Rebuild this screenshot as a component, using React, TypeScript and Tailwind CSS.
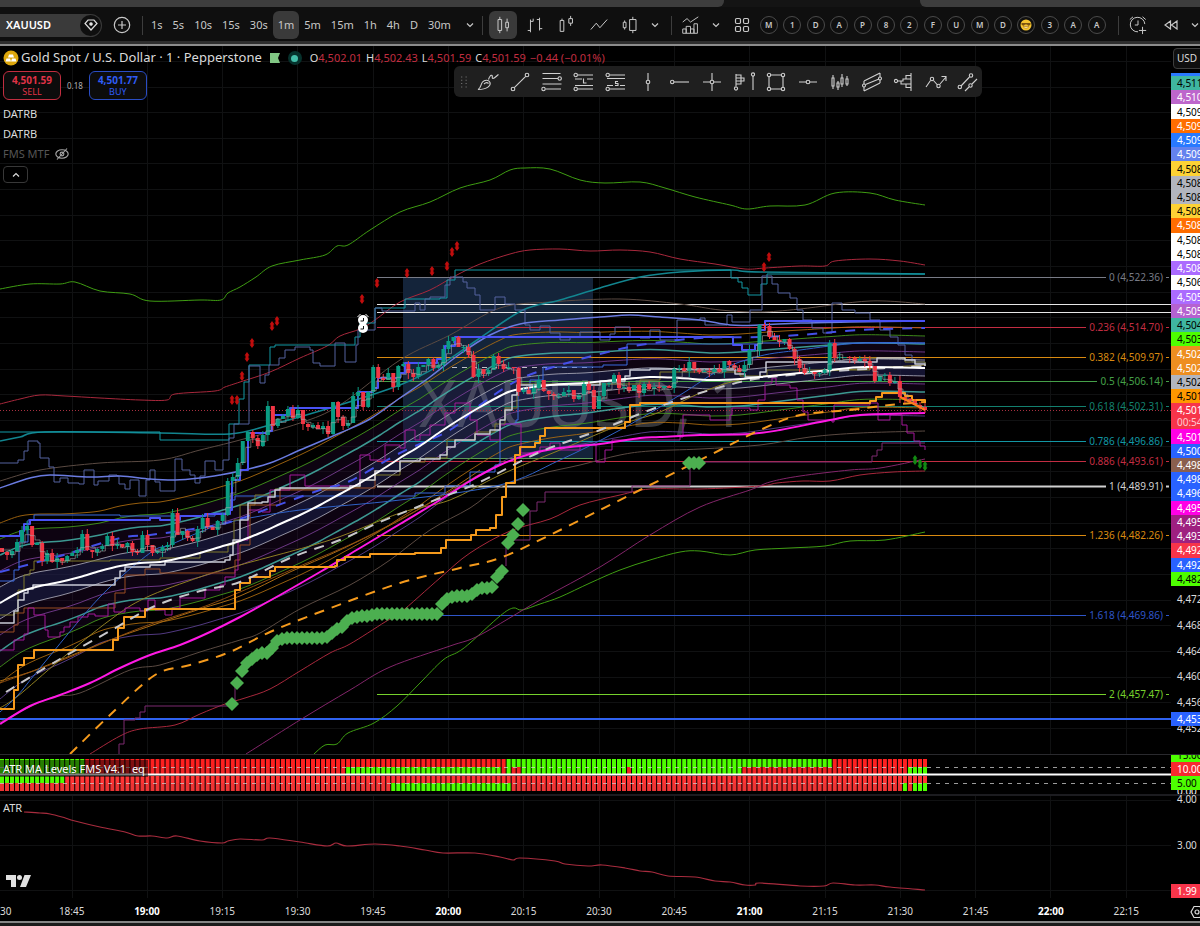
import React from "react"

type Pt = [number, number]

const STEP = 923 / 184
const barX = (i: number) => 2 + i * STEP

const parse = (s: string): Pt[] => s.trim().split(/\s+/).map((p) => p.split(",").map(Number) as Pt)

const smooth = (pts: Pt[]) => {
  let d = `M${pts[0][0]} ${pts[0][1]}`
  for (let i = 0; i < pts.length - 1; i++) {
    const a = pts[i - 1] || pts[i]
    const b = pts[i]
    const c = pts[i + 1]
    const e = pts[i + 2] || c
    d += ` C${b[0] + (c[0] - a[0]) / 6} ${b[1] + (c[1] - a[1]) / 6} ${c[0] - (e[0] - b[0]) / 6} ${c[1] - (e[1] - b[1]) / 6} ${c[0]} ${c[1]}`
  }
  return d
}

const stepped = (pts: Pt[]) => `M${pts[0][0]} ${pts[0][1]} ` + pts.slice(1).map(([x, y]) => `H${x} V${y}`).join(" ")

const at = (pts: Pt[], x: number) => {
  for (let i = 1; i < pts.length; i++) {
    if (x <= pts[i][0]) {
      const [x0, y0] = pts[i - 1]
      const [x1, y1] = pts[i]
      return y0 + ((x - x0) / (x1 - x0)) * (y1 - y0)
    }
  }
  return pts[pts.length - 1][1]
}

// moving average and the width of one channel band
const MEAN = parse(
  "0,603 20,592 40,586 60,582 80,577 100,571 120,566 140,563 160,562 180,558 200,553 220,547 240,541 260,533 280,524 300,515 320,505 340,494 360,483 380,471 400,458 420,446 440,432 460,419 480,407 500,396 515,390 550,385 585,383 615,380 650,377 680,378 710,380 740,379 770,376 800,373 830,370 865,367 925,368"
)
const UNIT = parse("0,16 50,14 100,12 240,12 400,12 523,11 660,9 749,9 874,8 925,8")
const band = (n: number): Pt[] => MEAN.map(([x, y]) => [x, y + n * at(UNIT, x)])

const area = (a: number, b: number) =>
  smooth(band(a)) + " L" + band(b).reverse().map((p) => p.join(" ")).join(" L") + " Z"

const BANDS: [number, string, number][] = [
  [-5, "#b06f10", 1],
  [-4, "#46a01c", 1],
  [-3, "#45b3a8", 1.5],
  [-2, "#7b3f98", 1],
  [-1, "#a9a9b8", 1],
  [1, "#a9a9b8", 1],
  [2, "#7b3f98", 1],
  [3, "#45b3a8", 1.5],
  [4, "#46a01c", 1],
  [5, "#b06f10", 1],
  [6, "#5f4396", 1],
]

interface Line {
  c: string
  w?: number
  dash?: string
  step?: boolean
  p: string
}

const LINES: Line[] = [
  { c: "#3f9d12", p: "0,289 30,284 60,284 75,282 100,291 130,294 150,301 200,300 221,300 228,293 240,287 256,277 272,266 300,260 325,255 337,246 348,245 370,230 400,212 430,202 460,188 490,180 510,170 525,168 550,169 580,180 605,183 640,182 665,188 695,197 730,205 747,209 770,206 805,205 835,193 870,193 895,200 925,205" },
  { c: "#3f9d12", p: "314,754 325,745 337,744 348,733 374,723 397,706 420,683 443,660 458,652 470,643 500,616 513,608 522,610 540,604 560,597 590,583 620,570 650,560 680,552 700,551 730,555 755,550 790,548 825,546 850,541 885,540 925,532" },
  { c: "#a8283c", p: "0,404 20,399 40,395 65,396 100,398 140,400 167,400 175,394 215,391 225,387 240,382 270,372 300,358 327,346 340,336 360,329 375,320 400,302 430,290 455,276 480,264 510,254 530,250 560,249 590,251 620,250 650,252 680,259 715,264 745,269 765,268 800,266 825,266 835,261 870,259 900,261 925,265" },
  { c: "#a8283c", p: "90,754 120,736 140,729 175,725 200,714 225,704 245,698 270,689 300,671 330,653 350,644 385,622 400,613 440,578 470,553 510,531 550,519 580,505 620,495 650,489 700,489 760,486 777,483 803,481 830,481 860,475 893,472 925,471" },
  { c: "#83256a", p: "246,754 300,720 350,690 390,667 450,646 480,635 540,600 600,567 650,535 700,507 750,490 770,482 800,476 850,470 880,468 925,459" },
  { c: "#5a4a42", p: "0,481 40,470 100,463 160,460 200,450 240,440 300,423 340,405 400,360 450,335 500,308 550,302 620,299 680,304 720,310 760,312 800,309 870,301 925,304" },
  { c: "#5a4a42", p: "0,722 50,698 80,693 130,670 160,665 200,652 240,640 260,633 300,609 350,585 390,560 430,530 470,508 500,487 540,474 580,465 620,455 650,451 700,449 760,445 810,437 860,433 925,431" },
  { c: "#12858f", w: 1.5, p: "0,441 20,437 45,432 160,433 230,434 270,425 330,408 400,385 440,365 480,338 523,310 560,300 600,288 640,277 680,272 732,270 760,272 925,274" },
  { c: "#139aa6", step: true, p: "0,432 160,432 160,440 229,440 229,424 239,399 244,382 249,365 270,347 275,345 355,344 355,337 360,323 375,318 375,308 400,308 405,299 440,298 447,295 447,280 455,277 455,270 731,270 731,278 738,282 742,288 748,295 761,295 761,284 767,274 925,274" },
  { c: "#55639f", step: true, p: "0,463 18,460 24,451 28,441 38,443 40,458 49,467 54,482 60,478 68,483 79,484 84,470 94,485 98,481 109,475 117,476 119,484 125,489 130,480 139,496 146,480 150,470 155,482 160,491 173,491 175,459 182,470 190,475 195,483 200,476 205,461 215,470 223,460 229,438 234,424 249,366 260,383 265,375 269,365 279,358 285,350 295,347 310,350 313,363 320,366 335,343 345,362 356,345 358,330 375,320 375,308 382,311 400,311 415,303 420,310 425,299 430,297 445,285 450,277 463,282 467,288 475,295 480,310 495,310 495,297 505,304 515,310 525,325 530,330 540,326 550,333 560,340 570,337 580,332 600,340 610,334 615,327 630,337 640,338 650,330 660,340 677,340 677,320 700,318 705,325 727,315 732,322 750,310 762,300 762,276 772,284 778,293 790,298 797,310 803,320 812,328 823,333 832,303 842,310 855,313 870,320 880,330 890,337 898,345 905,355 912,362 925,364" },
  { c: "#6a7be0", w: 1.5, p: "0,488 30,478 50,475 90,477 120,476 150,479 175,480 200,478 220,475 240,471 270,463 300,450 340,433 370,419 400,398 430,377 460,354 490,335 520,324 560,320 600,317 630,315 660,317 700,320 730,325 760,325 800,323 850,322 925,321" },
  { c: "#a86a14", p: "0,681 30,672 60,660 110,640 150,626 200,609 240,596 290,572 340,550 400,520 450,490 480,470" },
  { c: "#8a4a10", p: "0,683 60,661 140,628 200,608 240,592 300,566 360,540 430,503 480,474" },
  { c: "#8f7f22", p: "0,708 18,696 60,660 110,620 145,598 200,577 240,565 330,540 400,513 450,500 500,475 560,450 620,425 660,412 700,393 740,380 800,373 925,365" },
  { c: "#2f62c8", p: "0,712 18,695 40,668 100,597 150,553 170,545 200,532 230,522 300,510 400,500 500,485 560,460 620,430 680,395 720,370 760,356 800,350 860,343 925,343" },
  { c: "#3a6ae0", step: true, p: "0,581 14,570 19,542 28,520 34,515 120,516 215,513 230,500 235,496 415,496 415,493 445,490 445,486 470,472 495,465 500,424 516,420 518,390 530,380 543,367 603,365 627,362 627,344 760,343 925,343" },
  { c: "#7f7a2a", step: true, p: "0,615 14,613 18,590 24,575 30,570 34,561 110,560 160,558 200,552 228,545 234,520 240,505 255,495 275,489 340,487 360,480 375,475 400,462 425,458 447,440 475,432 495,424 505,408 517,384 640,380 660,372 740,376 767,370 870,358 905,362 925,366" },
  { c: "#9a4d22", step: true, p: "0,632 14,625 18,613 24,608 112,608 115,593 125,575 145,569 160,573 235,573 235,560 240,545 250,505 280,490 350,488 375,470" },
  { c: "#a3189a", step: true, p: "0,650 14,640 24,634 28,608 34,615 45,630 48,637 60,632 64,627 70,622 78,617 88,614 95,616 108,604 114,612 125,608 140,611 148,600 155,610 165,615 172,608 180,598 190,598 205,590 220,585 225,577 235,570 238,540 248,510 262,512 270,490 290,475 305,475 305,486 355,485 360,455 370,460 385,445 400,448 405,430 415,440 420,435 430,425 445,413 455,403 470,420 477,435 490,440 500,425 505,424 520,424 521,453 540,447 550,443 560,450 580,445 596,462 605,450 612,440 680,437 683,415 710,420 730,415 732,408 750,410 758,400 765,383 772,378 776,385 790,388 797,400 803,412 808,420 832,422 834,405 870,403 878,420 890,415 902,425 907,433 914,441 920,446 925,450" },
  { c: "#7c2a70", step: true, p: "119,754 119,744 124,720 135,718 140,712 145,706 230,705 235,680" },
  { c: "#7c2a70", step: true, p: "506,566 506,540 530,511 537,502 545,492 632,486 690,467 695,462 872,462 872,456 877,450 882,443 910,443 925,443" },
  { c: "#4a52f5", w: 2, step: true, p: "0,536 20,531 24,524 30,520 150,518 160,520 180,516 205,514 230,510 232,480 240,470 248,433 267,431 272,415 290,408 355,408 358,392 373,388 378,378 400,373 405,363 437,359 445,346 455,337 732,337 733,345 742,350 755,345 760,330 765,321 925,321" },
  { c: "#4450e8", w: 2, dash: "10 9", p: "0,572 60,556 120,538 150,535 200,528 230,522 270,508 320,490 350,481 400,453 450,430 480,405 520,379 560,365 600,354 640,345 700,338 760,337 800,335 860,330 925,328" },
  { c: "#c9ccd6", w: 1.5, step: true, p: "0,623 14,611 18,600 24,593 28,589 33,585 110,585 115,578 120,571 125,567 150,565 165,562 225,560 230,555 233,540 240,520 248,503 262,502 268,497 275,490 280,488 350,486 360,480 375,471 400,461 420,459 440,455 447,447 455,440 475,434 490,430 500,420 505,410 512,395 517,385 600,381 625,376 630,370 650,369 690,369 735,374 745,377 760,372 766,362 832,362 870,362 877,358 905,360 915,364 925,366" },
  { c: "#ff19e4", w: 2, p: "0,724 30,706 60,695 90,683 120,668 150,655 180,645 210,632 240,617 280,595 320,572 360,548 400,524 440,500 470,481 500,465 530,454 560,448 600,444 640,438 660,437 700,435 750,434 780,430 830,420 860,415 925,413" },
  { c: "#f59a1c", w: 2, step: true, p: "0,709 14,690 18,665 24,658 34,650 113,640 118,628 124,617 145,609 234,609 235,590 240,583 250,577 270,571 275,567 335,566 337,560 345,557 370,554 415,553 441,548 446,540 471,535 476,530 490,528 496,515 502,497 506,483 515,455 520,447 535,443 540,436 545,428 610,428 625,422 630,405 640,403 870,401 876,397 882,393 900,393 905,396 912,400 925,403" },
  { c: "#f59a1c", w: 2, dash: "10 8", p: "70,754 110,715 155,675 190,665 230,652 270,632 320,612 400,583 460,568 500,558 550,535 600,510 640,490 680,470 720,450 760,430 800,415 850,410 890,405 925,402" },
  { c: "#c8c8cc", w: 2, dash: "10 8", p: "6,692 60,659 110,631 155,606 200,591 240,582 290,558 340,540 380,522 430,502 480,482 540,452 600,430 650,410 700,393 750,380 800,374 850,370 925,366" },
]

// close of each bar, in chart pixels
const CLOSES = [
  552, 555, 551, 542, 530, 526, 545, 543, 561, 553,
  562, 558, 561, 556, 553, 550, 534, 550, 552, 549,
  546, 536, 546, 544, 547, 543, 552, 553, 535, 545,
  553, 551, 547, 545, 513, 535, 531, 538, 541, 529,
  518, 527, 530, 521, 515, 481, 477, 463, 441, 432,
  438, 446, 435, 406, 426, 419, 416, 409, 418, 410,
  424, 427, 425, 429, 426, 434, 402, 417, 426, 423,
  396, 392, 407, 392, 367, 378, 380, 373, 387, 366,
  364, 373, 377, 367, 365, 359, 368, 365, 349, 341,
  337, 347, 347, 355, 377, 369, 374, 370, 356, 364,
  369, 367, 368, 392, 390, 394, 388, 380, 391, 394,
  396, 396, 392, 390, 399, 395, 384, 390, 409, 396,
  383, 383, 375, 388, 387, 391, 385, 393, 384, 389,
  387, 388, 386, 388, 369, 368, 371, 362, 369, 372,
  371, 372, 369, 372, 361, 365, 368, 372, 365, 350,
  350, 325, 326, 337, 340, 342, 339, 349, 359, 368,
  373, 372, 374, 373, 370, 343, 358, 357, 357, 358,
  361, 359, 361, 366, 381, 376, 375, 383, 381, 397,
  399, 401, 405, 407, 410,
]

const DIAMONDS = parse(
  "232,704 237,683 242,671 247,663 252,659 257,655 262,653 267,653 272,648 277,641 282,639 287,638 292,638 297,638 302,638 307,638 312,638 317,638 322,638 327,637 332,633 337,629 342,627 347,621 352,618 357,617 362,616 367,616 372,615 377,614 382,614 387,614 392,614 397,614 402,614 407,614 412,614 417,614 422,614 427,614 432,614 437,614 442,604 447,599 452,597 457,596 462,596 467,596 472,594 477,590 482,588 487,588 492,587 497,577 502,571 508,543 513,535 518,524 523,510 689,463 694,463 699,463"
)

const SELLS = parse("232,400 237,400 242,376 247,357 252,343 272,326 277,321 362,299 377,283 407,273 432,271 447,266 452,252 457,246 764,267 769,257")
const BUYS = parse("915,460 920,464 925,466")

const FIBS: [number, string, string, number, number?][] = [
  [277, "0 (4,522.36)", "#787b86", 1106],
  [327, "0.236 (4,514.70)", "#c22d42", 1086],
  [357, "0.382 (4,509.97)", "#d98a10", 1086],
  [381, "0.5 (4,506.14)", "#45a049", 1097],
  [406, "0.618 (4,502.31)", "#13806f", 1086],
  [441, "0.786 (4,496.86)", "#1297a5", 1086],
  [461, "0.886 (4,493.61)", "#c22d42", 1086],
  [486, "1 (4,489.91)", "#d0d0d0", 1106, 2],
  [535, "1.236 (4,482.26)", "#d98a10", 1086],
  [615, "1.618 (4,469.86)", "#2f55c8", 1086],
  [694, "2 (4,457.47)", "#76d12c", 1106],
]

const TIMES: [string, boolean?][] = [
  ["18:45"], ["19:00", true], ["19:15"], ["19:30"], ["19:45"], ["20:00", true], ["20:15"], ["20:30"],
  ["20:45"], ["21:00", true], ["21:15"], ["21:30"], ["21:45"], ["22:00", true], ["22:15"],
]
const GRID_X = TIMES.map((_, i) => Math.round(71.5 + i * 75.3) + 0.5)

const TAGS: [string, string][] = [
  ["4,511", "bg-[#3fb6a0] text-black"],
  ["4,510", "bg-[#bd66cc] text-white"],
  ["4,509", "bg-white text-black"],
  ["4,509", "bg-[#ff6d00] text-white"],
  ["4,509", "bg-[#2979ff] text-white"],
  ["4,509", "bg-[#6482ee] text-white"],
  ["4,508", "bg-[#fdd235] text-black"],
  ["4,508", "bg-[#b2b5be] text-black"],
  ["4,508", "bg-[#b2b5be] text-black"],
  ["4,508", "bg-[#fdd235] text-black"],
  ["4,508", "bg-[#ff6d00] text-white"],
  ["4,508", "bg-white text-black"],
  ["4,508", "bg-white text-black"],
  ["4,508", "bg-[#ab6bff] text-white"],
  ["4,506", "bg-white text-black"],
  ["4,505", "bg-[#ab6bff] text-white"],
  ["4,505", "bg-[#b562d0] text-white"],
  ["4,504", "bg-[#3fb6a0] text-black"],
  ["4,503", "bg-[#4dff00] text-black"],
  ["4,502", "bg-[#ee8e20] text-white"],
  ["4,502", "bg-[#ee8e20] text-white"],
  ["4,502", "bg-[#b2b5be] text-black"],
  ["4,501", "bg-[#ff9800] text-black"],
  ["4,501", "bg-[#f7344a] text-white"],
  ["4,501", "bg-[#ff00e5] text-white"],
  ["4,500", "bg-[#2962ff] text-white"],
  ["4,498", "bg-[#8a5f4e] text-white"],
  ["4,498", "bg-[#2962ff] text-white"],
  ["4,496", "bg-[#2962ff] text-white"],
  ["4,495", "bg-[#ff00e5] text-white"],
  ["4,495", "bg-[#9e2080] text-white"],
  ["4,493", "bg-[#9e2080] text-white"],
  ["4,492", "bg-[#f7344a] text-white"],
  ["4,492", "bg-[#2962ff] text-white"],
  ["4,482", "bg-[#4dff00] text-black"],
]

const Icon: React.FC<{ children: React.ReactNode; className?: string }> = ({ children, className = "size-[22px]" }) => (
  <svg viewBox="0 0 22 22" fill="none" stroke="currentColor" strokeWidth="1.1" className={`shrink-0 ${className}`}>
    {children}
  </svg>
)

const Chevron = () => (
  <svg viewBox="0 0 8 8" fill="none" stroke="currentColor" strokeWidth="1.2" className="size-2">
    <path d="M1 2.500 4 5.500 7 2.500" />
  </svg>
)

const Separator = () => <div className="h-[19px] w-px shrink-0 bg-[#3d3d3d]" />

const INTERVALS = ["1s", "5s", "10s", "15s", "30s", "1m", "5m", "15m", "1h", "4h", "D", "30m"]
const LAYOUTS = ["M", "1", "D", "A", "P", "8", "2", "F", "U", "M", "D", "face", "3", "A", "A"]

const CHART_TYPES: [string, React.ReactNode][] = [
  ["Candles", <path d="M7.500 2v3M7.500 17v3M5.500 5h4v12h-4zM15.500 4v4M15.500 14v4M14 8h3v6h-3z" />],
  ["Bars", <path d="M6 5v14M3 17h3M6 7h3M16 3v14M13 5h3M16 15h3M9 4v3" />],
  ["Hollow candles", <path d="M3.500 6h4v12h-4zM5.500 4v2M15 1v3M15 9v3M13 4h4v5h-4z" />],
  ["Line", <path d="M2 16 8 9l4 5 8-9" />],
  ["Heikin Ashi", <path d="M4 6v2M4 14v2M2.500 8h3v6h-3zM13 2v3M13 17v3M9.500 5h7v12h-7z" />],
]

const DRAW_TOOLS: [string, React.ReactNode][] = [
  ["Brush", <path d="M1 18.500c3-1 2.500-5 4.500-7.500 2-2.500 6.500-2.500 7.500.5S10.500 18.500 1 18.500zM7 13c1.500-1.500 3.500-1.500 4.500-.5M11.500 8.500c1-3 2.500-5 3.500-4s-.5 3 1 3S20 4.500 21.500 3.500" />],
  ["Trend line", <><circle cx="4" cy="18" r="1.800" /><circle cx="18" cy="4" r="1.800" /><path d="M5.300 16.700 16.700 5.300" /></>],
  ["Fib retracement", <><path d="M1.500 2.500h18M1.500 7.500H17M1.500 13h19M4.500 18H20" /><circle cx="18.700" cy="7.500" r="1.700" /><circle cx="2.500" cy="18" r="1.700" /></>],
  ["Long position", <><path d="M4.500 4H20M2 8h7M14 8h6M2 14.500h18M4.500 18H20M10.500 7.500v4.500h3" /><circle cx="2.700" cy="4" r="1.700" /><circle cx="2.700" cy="18" r="1.700" /></>],
  ["Short position", <><path d="M4.500 4H20M2 7.500h18M2 14.500h6M15 14.500h5M4.500 18H20M13 10.500h-2.500v2H13v2h-3" /><circle cx="2.700" cy="4" r="1.700" /><circle cx="2.700" cy="18" r="1.700" /></>],
  ["Vertical line", <><path d="M11 2v7M11 13v7" /><circle cx="11" cy="11" r="1.800" /></>],
  ["Horizontal ray", <><path d="M5 11h15" /><circle cx="3.200" cy="11" r="1.700" /></>],
  ["Cross line", <><path d="M11 2v7M11 13v7M2 11h7M13 11h7" /><circle cx="11" cy="11" r="1.800" /></>],
  ["Fixed range", <><path d="M3 3v12M3 4h5v3h3v3H8v3H3M3 7h5v3H3M20 5v14" /><circle cx="3" cy="17.500" r="1.600" /><circle cx="20" cy="3.500" r="1.600" /></>],
  ["Rectangle", <><path d="M5.500 4h11M5.500 18h11M4 5.500v11M18 5.500v11" /><circle cx="4" cy="4" r="1.700" /><circle cx="18" cy="4" r="1.700" /><circle cx="4" cy="18" r="1.700" /><circle cx="18" cy="18" r="1.700" /></>],
  ["Horizontal line", <><path d="M2 11h7M13 11h7" /><circle cx="11" cy="11" r="1.800" /></>],
  ["Bars pattern", <path d="M4 4v3M4 15v3M3 7h2v8H3zM9 10v2M9 16v3M8 12h2v4H8zM13 3v4M13 13v3M12 7h2v6h-2zM18 5v3M18 13v2M17 8h2v5h-2z" />],
  ["Channel", <><path d="M3 10 19 2M4.500 13.500 18 8M3 20l16-8M3 10v3M3 16v4M19 2v4M19 9v3" /><circle cx="3" cy="14.500" r="1.500" /><circle cx="19" cy="7.500" r="1.500" /></>],
  ["Anchored profile", <><path d="M4.500 10H8M18 2v18M18 4.500h-5V8M18 8h-8v2H8v3h10M18 16.500h-5V13" /><circle cx="3" cy="10" r="1.600" /></>],
  ["Path", <><path d="M1 16 5.500 9.500M8.500 9.500l4 4.500M15 13l6-7M16.500 5.500H21V10" /><circle cx="7" cy="8" r="1.700" /><circle cx="13.500" cy="15" r="1.700" /></>],
  ["Parallel lines", <><path d="M5 15 13.500 6M9 20l4-4M16 13l5-5" /><circle cx="3.800" cy="16" r="1.700" /><circle cx="15" cy="4.500" r="1.700" /><circle cx="14.500" cy="14.500" r="1.700" /></>],
]

const TopBar = () => (
  <header className="bg-[#0f0f0f]">
    <div className="flex h-[7px] justify-between bg-[#141414]">
      <div className="w-[60.3%] rounded-br-md bg-[#3d3d3d]" />
      <div className="w-[23.3%] rounded-bl-md bg-[#3d3d3d]" />
    </div>
    <div className="flex h-[34px] items-center overflow-hidden whitespace-nowrap pt-0.5 text-[11px] text-[#c8c8c8]">
      <div className="flex h-[23px] w-[102px] shrink-0 items-center justify-between rounded-r-full bg-[#3a3a3a] pl-1.5">
        <button className="font-semibold text-white">XAUUSD</button>
        <button aria-label="Symbol details" className="mr-px flex size-[21px] items-center justify-center rounded-full bg-[#0f0f0f]">
          <svg viewBox="0 0 14 12" fill="none" stroke="#ddd" strokeWidth="1.200" className="h-3 w-3.5">
            <path d="M4 1h6l3 3.500L7 11 1 4.500z" />
            <circle cx="7" cy="5" r="1.200" fill="#fff" />
          </svg>
        </button>
      </div>
      <button aria-label="Compare" className="flex w-10 shrink-0 justify-center">
        <svg viewBox="0 0 18 18" fill="none" stroke="currentColor" strokeWidth="1.200" className="size-[18px]">
          <circle cx="9" cy="9" r="7.700" />
          <path d="M9 5v8M5 9h8" />
        </svg>
      </button>
      <Separator />
      <div className="ml-[3px] flex shrink-0 items-center">
        {INTERVALS.map((t) => (
          <button key={t} className={`h-7 rounded-md px-[5px] ${t === "1m" ? "bg-[#3a3a3a]" : ""}`}>
            {t}
          </button>
        ))}
        <button aria-label="More intervals" className="ml-1 flex h-7 w-5 items-center justify-center">
          <Chevron />
        </button>
      </div>
      <div className="w-0.5 shrink-0" />
      <Separator />
      <div className="ml-1.5 flex shrink-0 items-center gap-1">
        {CHART_TYPES.map(([name, glyph], i) => (
          <button
            key={name}
            aria-label={name}
            className={`flex size-7 items-center justify-center rounded-md ${i === 0 ? "bg-[#3a3a3a]" : ""}`}
          >
            <Icon className="size-5">{glyph}</Icon>
          </button>
        ))}
        <button aria-label="More chart types" className="flex h-7 w-3 items-center justify-center">
          <Chevron />
        </button>
      </div>
      <div className="w-2.5 shrink-0" />
      <Separator />
      <div className="flex shrink-0 items-center">
        <button aria-label="Indicators" className="flex h-7 w-[38px] items-center justify-center">
          <Icon className="size-[19px]">
            <path d="M2 7 7 3l4 4 9-6M2 15h4v5H2zM6 12h5v8H6zM11 15h4v5h-4zM15 9h4v11h-4z" />
          </Icon>
        </button>
        <button aria-label="Favourite indicators" className="flex h-7 w-3 items-center justify-center">
          <Chevron />
        </button>
        <button aria-label="Templates" className="flex h-7 w-10 items-center justify-center">
          <svg viewBox="0 0 16 16" fill="none" stroke="currentColor" strokeWidth="1.200" className="size-4">
            <rect x="1.500" y="1.500" width="5" height="5" rx="1.200" />
            <rect x="9.500" y="1.500" width="5" height="5" rx="1.200" />
            <rect x="1.500" y="9.500" width="5" height="5" rx="1.200" />
            <rect x="9.500" y="9.500" width="5" height="5" rx="1.200" />
          </svg>
        </button>
      </div>
      <div className="ml-[-2px] flex w-[346px] shrink-0 items-center justify-between text-[8px] font-semibold">
        {LAYOUTS.map((l, i) => (
          <button
            key={i}
            aria-label={l === "face" ? "Emoji template" : undefined}
            className="flex size-[18px] items-center justify-center rounded-full border border-[#4a4a4a]"
          >
            {l === "face" ? (
              <svg viewBox="0 0 12 12" className="size-3">
                <circle cx="6" cy="6" r="5.500" fill="#f4c430" />
                <path d="M1.500 4h9v1.500q-1 1.500-2.500 1l-1-1h-2l-1 1q-1.500.5-2.500-1z" fill="#7a5310" />
                <path d="M3 7.500h6q-3 3.500-6 0" fill="#fff3c4" stroke="#a8741a" strokeWidth=".6" />
              </svg>
            ) : (
              l
            )}
          </button>
        ))}
      </div>
      <div className="w-3 shrink-0" />
      <Separator />
      <button aria-label="Create alert" className="flex h-7 w-[38px] shrink-0 items-center justify-center">
        <Icon className="size-5">
          <path d="M18.500 10A8 8 0 1 0 11 18.500M11 6v5H7.500M2 5l3.500-3M16 2l3.500 3M16 13v8M12 17h8" />
        </Icon>
      </button>
      <button aria-label="Replay" className="flex h-7 w-7 shrink-0 items-center justify-center">
        <svg viewBox="0 0 14 10" fill="none" stroke="currentColor" strokeWidth="1.200" className="h-2.5 w-3.5">
          <path d="M6.500 1v8L1 5zM13 1v8L7.500 5z" />
        </svg>
      </button>
      <button aria-label="Replay menu" className="ml-1.5 flex h-7 shrink-0 items-center">
        <Chevron />
      </button>
    </div>
    <div className="h-[5px] border-b-2 border-[#8c8c8c] bg-[#2e2e2e]" />
  </header>
)

const Arrow: React.FC<{ x: number; y: number; color: string }> = ({ x, y, color }) => (
  <path d={`M${x} ${y - 5}l2.500 3.500h-1v3h1l-2.500 3.500-2.500-3.500h1v-3h-1z`} fill={color} />
)

const PriceChart = () => (
  <svg viewBox="0 46 1171 708" preserveAspectRatio="xMaxYMid slice" className="block h-[708px] w-full" role="img" aria-label="XAUUSD chart">
    <g stroke="#101112" shapeRendering="crispEdges">
      {GRID_X.map((x) => (
        <path key={x} d={`M${x} 46V754`} />
      ))}
      {Array.from({ length: 27 }, (_, i) => (
        <path key={i} d={`M0 ${Math.round(728 - i * 25.66) + 0.5}H1171`} />
      ))}
    </g>
    <rect x="403" y="278" width="190" height="180" fill="#14243a" />
    <path d={area(-4, 4)} fill="#2a0a38" fillOpacity=".3" />
    <path d={area(-1, 1)} fill="#1c2350" fillOpacity=".5" />
    <text x="419" y="427" fontSize="65" fill="#8b8e99" fillOpacity=".38">
      XAUUSD, 1
    </text>

    <path d="M377 304.500H1171M377 312.500H1171" stroke="#e6e6e6" />
    {FIBS.map(([y, label, color, end, w]) => (
      <g key={label}>
        <path d={`M377 ${y + 0.5}H${end}M1166 ${y + 0.5}h3`} stroke={color} strokeWidth={w || 1} />
        <text x="1163" y={y + 4} fontSize="10" textAnchor="end" fill={color}>
          {label}
        </text>
      </g>
    ))}
    <path d="M403 458.500H593" stroke="#5c9a58" />
    <path d="M452 367.500H593" stroke="#bfbfc6" strokeDasharray="5 5" />
    <path d="M0 410.500H1171" stroke="#a83040" strokeDasharray="1 2" />
    <path d="M0 719H1171" stroke="#2f62f0" strokeWidth="2" />

    <g fill="none" strokeLinejoin="round">
      {BANDS.map(([n, c, w]) => (
        <path key={n} d={smooth(band(n))} stroke={c} strokeWidth={w} strokeOpacity=".85" />
      ))}
      {LINES.map((l, i) => (
        <path
          key={i}
          d={l.step ? stepped(parse(l.p)) : smooth(parse(l.p))}
          stroke={l.c}
          strokeWidth={l.w || 1}
          strokeDasharray={l.dash}
        />
      ))}
      <path d={smooth(MEAN)} stroke="#fff" strokeWidth="2" />
    </g>

    {CLOSES.map((c, i) => {
      const o = i ? CLOSES[i - 1] : 548
      const top = Math.min(o, c)
      const h = Math.max(1, Math.abs(o - c))
      const color = c > o ? "#f23645" : "#0b9c83"
      return (
        <g key={i} fill={color}>
          <rect x={barX(i) - 2} y={top} width="4" height={h} />
          <rect x={barX(i) - 0.5} y={top - ((i * 7) % 6)} width="1" height={h + ((i * 7) % 6) + ((i * 5) % 7)} />
        </g>
      )
    })}
    {/* trailing stop over the bars */}
    <path
      d={"M2 550" + CLOSES.map((_, i) => (i > 1 ? `H${barX(i) - 2}V${(CLOSES[i] + CLOSES[i - 1] + CLOSES[i - 2]) / 3 + 2}` : "")).join("")}
      fill="none"
      stroke="#a8a8a8"
      strokeOpacity=".6"
    />
    <path d="M900 397 912 403 925 410" fill="none" stroke="#ff7a1a" strokeWidth="2" />

    {DIAMONDS.map(([x, y]) => (
      <path key={x} d={`M${x} ${y - 7}l7 7-7 7-7-7z`} fill="#4caf50" />
    ))}
    {SELLS.map(([x, y]) => (
      <Arrow key={x} x={x} y={y} color="#c00d0d" />
    ))}
    {BUYS.map(([x, y]) => (
      <Arrow key={x} x={x} y={y} color="#128a12" />
    ))}
    {[320, 328].map((y) => (
      <g key={y}>
        <circle cx="363" cy={y} r="5" fill="#fff" />
        <path d={`M363.500 ${y - 2}v3h-3`} fill="none" stroke="#111" />
      </g>
    ))}
    <path d="M357.500 317l3-3M368.500 317l-3-3" stroke="#fff" />
  </svg>
)

// [from, to] bar ranges (in pixels) that are lime, row by row
const ROWS: { y: number; h: number; red: string; lime: [number, number][] }[] = [
  { y: 759, h: 8, red: "#ff2020", lime: [[0, 84], [505, 833]] },
  { y: 767, h: 7, red: "#f02424", lime: [[0, 84], [345, 499], [506, 510], [521, 626], [631, 741], [907, 930]] },
  { y: 776, h: 7, red: "#ff3434", lime: [[0, 64]] },
  { y: 783, h: 8, red: "#ee3434", lime: [[390, 511], [902, 907], [912, 930]] },
]

const LevelsPane = () => (
  <svg viewBox="0 755 1171 39" preserveAspectRatio="xMaxYMid slice" className="block h-[39px] w-full" role="img" aria-label="ATR MA Levels">
    {ROWS.map((r) =>
      CLOSES.map((_, i) => {
        const x = barX(i)
        const lime = r.lime.some(([a, b]) => x >= a && x < b)
        return <rect key={`${r.y}-${i}`} x={x - 2} y={r.y} width="4" height={r.h} fill={lime ? "#4dff00" : r.red} />
      })
    )}
    <path d="M0 767.500H1171M0 783.500H1171" stroke="#cfcfcf" strokeOpacity=".75" strokeDasharray="4 5" />
    <path d="M0 774.500H1171" stroke="#fff" strokeWidth="2" />
  </svg>
)

const AtrPane = () => (
  <svg viewBox="0 796 1171 102" preserveAspectRatio="xMaxYMid slice" className="block h-[102px] w-full" role="img" aria-label="ATR">
    <g stroke="#101112" shapeRendering="crispEdges">
      {GRID_X.map((x) => (
        <path key={x} d={`M${x} 796V898`} />
      ))}
      <path d="M0 800.500H1171M0 845.500H1171M0 890.500H1171" />
    </g>
    <path
      d={smooth(parse("24,812 40,813 50,814 62,817 75,821 100,827 125,832 138,836 152,836 167,838 177,836 200,841 222,843 228,841 240,839 262,840 270,838 300,842 327,846 336,843 347,846 375,844 400,846 425,850 443,853 475,853 500,857 513,860 520,858 555,861 565,864 588,866 602,865 625,868 640,871 652,872 668,876 695,877 715,881 730,882 745,885 755,885 760,883 800,886 824,886 833,883 855,885 875,885 890,887 925,890"))}
      fill="none"
      stroke="#a82c3e"
      strokeWidth="1.200"
    />
    <path d="M6 875h10v12h-5v-7H6zM24.500 875H31l-5 12h-6z" fill="#e0e0e0" />
    <circle cx="19.500" cy="877.500" r="2.500" fill="#e0e0e0" />
  </svg>
)

const OHLC: [string, string][] = [["O", "4,502.01"], ["H", "4,502.43"], ["L", "4,501.59"], ["C", "4,501.59"]]

const Legend = () => (
  <div className="absolute left-[3px] top-1 flex flex-col items-start whitespace-nowrap">
    <div className="flex h-4 items-center">
      <svg viewBox="0 0 16 16" className="size-4">
        <circle cx="8" cy="8" r="7.500" fill="#dda70c" />
        <path d="M6 4.500h4l1 3H5zM3.500 8.500h3.500l1 3H2.500zM9 8.500h3.500l1 3H8z" fill="#fff" />
      </svg>
      <h1 className="ml-0.5 text-[13px] text-[#dbdbdb]">Gold Spot / U.S. Dollar · 1 · Pepperstone</h1>
      <svg viewBox="0 0 10 10" className="ml-2 size-2.5">
        <path d="M0 0h10L8 5l2 5H0z" fill="#81c784" />
      </svg>
      <span className="ml-2 flex size-3.5 items-center justify-center rounded-full bg-[#06312c]">
        <span className="size-[7px] rounded-full bg-[#42bda8]" />
      </span>
      <div className="ml-2 flex gap-1 text-[11px] text-[#dbdbdb]">
        {OHLC.map(([k, v]) => (
          <span key={k}>
            {k}
            <span className="text-[#c22e40]">{v}</span>
          </span>
        ))}
        <span className="text-[#c22e40]">−0.44 (−0.01%)</span>
      </div>
    </div>
    <div className="mt-[5px] flex items-center gap-1.5 text-[9px] leading-3">
      <button className="flex h-[29px] w-[58px] flex-col items-center justify-center rounded-md border border-[#c22e40] bg-[#0c0c0c] text-[#e03347]">
        <b className="text-[10px]">4,501.59</b>
        SELL
      </button>
      <span className="text-[8px] text-[#b0b0b0]">0.18</span>
      <button className="flex h-[29px] w-[58px] flex-col items-center justify-center rounded-md border border-[#2a4dc4] bg-[#0c0c0c] text-[#2f5cf5]">
        <b className="text-[10px]">4,501.77</b>
        BUY
      </button>
    </div>
    <div className="mt-1 text-[11px] leading-5 text-[#dbdbdb]">
      <div>DATRB</div>
      <div>DATRB</div>
      <div className="flex items-center gap-1.5 text-[#555]">
        FMS MTF
        <svg viewBox="0 0 14 12" fill="none" stroke="#a8a8a8" strokeWidth="1.100" className="h-3 w-3.5">
          <ellipse cx="7" cy="6" rx="6.200" ry="4.200" />
          <circle cx="7" cy="6" r="1.900" />
          <path d="M2 11.500 12 .5" />
        </svg>
      </div>
    </div>
    <button aria-label="Collapse legend" className="mt-0.5 flex h-[17px] w-[25px] items-center justify-center rounded-sm border border-[#383838] text-[#dbdbdb]">
      <svg viewBox="0 0 8 8" fill="none" stroke="currentColor" strokeWidth="1.200" className="size-2">
        <path d="M1 5.500 4 2.500 7 5.500" />
      </svg>
    </button>
  </div>
)

const DrawingToolbar = () => (
  <div className="absolute left-[454px] top-5 flex h-[31px] items-center rounded-md bg-[#1f1f1f] pl-1.5 text-[#d0d0d0]">
    <svg viewBox="0 0 8 12" className="h-3 w-2" fill="#6a6a6a">
      {[1, 4.3, 7.6, 11].map((y) => (
        <path key={y} d={`M1 ${y - 0.5}h1.300v1H1zM5.500 ${y - 0.5}h1.300v1H5.500z`} />
      ))}
    </svg>
    <div className="ml-1 flex">
      {DRAW_TOOLS.map(([name, glyph]) => (
        <button key={name} aria-label={name} className="flex h-[31px] w-8 items-center justify-center last:w-[30px]">
          <Icon>{glyph}</Icon>
        </button>
      ))}
    </div>
  </div>
)

const PriceAxis = () => (
  <div className="relative overflow-hidden whitespace-nowrap text-[10px] text-[#dbdbdb]">
    <button className="ml-[2px] mt-0.5 flex h-[21px] w-10 items-center rounded border border-[#3d3d3d] bg-[#0f0f0f] pl-[3px]">USD</button>
    <div className="mt-1 h-[3px] bg-[#2979ff]" />
    <div className="flex h-[510px] flex-col">
      {TAGS.map(([v, cls], i) =>
        i === 23 ? (
          <div key={i} className={`flex h-[26px] flex-col justify-center pl-1.5 leading-3 ${cls}`}>
            <span>{v}</span>
            <span className="text-[#ffc9cf]">00:54</span>
          </div>
        ) : (
          <div key={i} className={`flex flex-1 items-center pl-1.5 leading-3 ${cls}`}>
            {v}
          </div>
        )
      )}
    </div>
    <div className="mt-px flex h-[154px] flex-col">
      {["4,472", "4,468", "4,464", "4,460", "4,456", "4,452"].map((v) => (
        <span key={v} className="flex flex-1 items-center pl-1.5">
          {v}
        </span>
      ))}
    </div>
    <div className="absolute inset-x-0 bottom-7 flex h-3.5 items-center bg-[#2962ff] pl-1.5 text-white">4,453</div>
  </div>
)

export default function App() {
  return (
    <div className="overflow-hidden bg-black font-['Noto_Sans',sans-serif]">
      <TopBar />
      <main className="grid grid-cols-[1fr_29px]">
        <div className="relative overflow-hidden">
          <PriceChart />
          <Legend />
          <DrawingToolbar />
        </div>
        <PriceAxis />

        <div className="relative border-t border-[#2a2a2e]">
          <LevelsPane />
          <div className="absolute left-0 top-[5px] bg-black/50 px-[3px] text-[11px] leading-[17px] text-white">
            ATR MA Levels FMS V4.1&nbsp; eq
          </div>
        </div>
        <div className="flex h-10 flex-col overflow-hidden border-t border-[#2a2a2e] text-[10px] leading-3.5 text-white">
          <span className="h-[7px] overflow-hidden bg-[#4dff00] pl-1.5 leading-[1px] text-black">15.00</span>
          <span className="h-3.5 bg-[#f7282f] pl-1.5">10.00</span>
          <span className="h-3.5 bg-[#4dff00] pl-1.5 text-black">5.00</span>
          <span className="h-1 overflow-hidden pl-1.5 leading-[2px]">0.00</span>
        </div>

        <div className="relative border-t-2 border-[#1c1c20]">
          <AtrPane />
          <div className="absolute left-[3px] top-1 text-[11px] leading-4 text-[#dbdbdb]">ATR</div>
        </div>
        <div className="flex flex-col justify-between border-t-2 border-[#1c1c20] text-[10px] leading-3.5 text-[#dbdbdb]">
          <span className="-mt-1 pl-1.5">4.00</span>
          <span className="pl-1.5">3.00</span>
          <span className="bg-[#f7344a] pl-1.5 text-white">1.99</span>
        </div>

        <div className="flex h-[23px] items-center overflow-hidden whitespace-nowrap pt-1 text-[10px] text-[#dbdbdb]">
          <span className="w-[34px] shrink-0">30</span>
          {TIMES.map(([t, bold]) => (
            <span key={t} className={`flex-1 text-center ${bold ? "font-bold text-white" : ""}`}>
              {t}
            </span>
          ))}
          <span className="w-[7px]" />
        </div>
        <button aria-label="Chart settings" className="flex items-center justify-end overflow-hidden pt-1 text-[#dbdbdb]">
          <svg viewBox="0 0 14 14" fill="none" stroke="currentColor" strokeWidth="1.200" className="-mr-1 size-3.5 shrink-0">
            <path d="M4 1.500h6L13 7l-3 5.500H4L1 7z" />
            <circle cx="7" cy="7" r="2" />
          </svg>
        </button>
      </main>
      <footer className="h-[5px] border-t-2 border-[#858585] bg-[#1a1a1a]" />
    </div>
  )
}
